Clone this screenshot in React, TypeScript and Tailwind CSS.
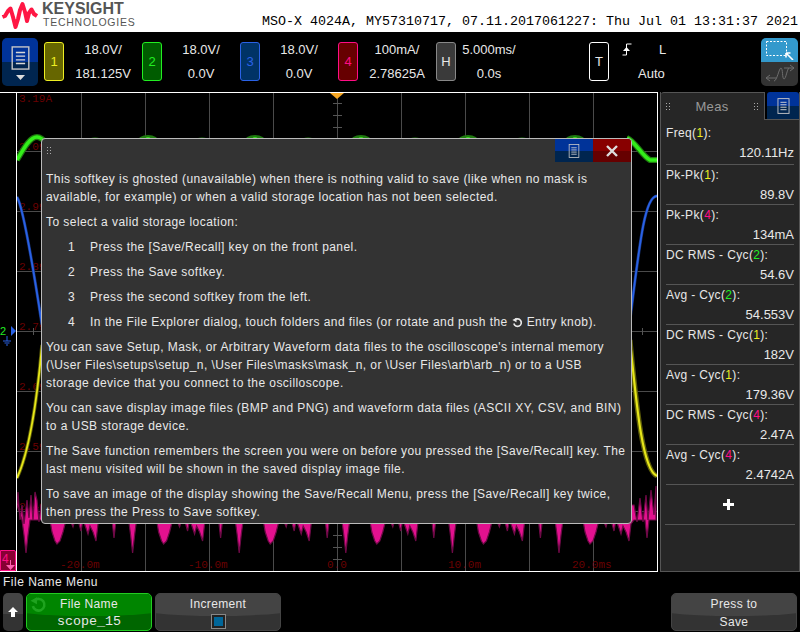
import type { ReactNode } from 'react';

const SANS = "font-['Liberation_Sans',Arial,sans-serif]";
const MONO = "font-['Liberation_Mono','Courier_New',monospace]";

// one period of the pink noise, offsets from the main spike
const PINK_PERIOD: [number, number][] = [
  [-4, 520], [-2, 535], [0, 553], [2, 535], [4, 520], [24, 520], [26, 532], [29, 541], [31, 544],
  [34, 541], [37, 532], [40, 520], [44, 520], [47, 527], [49, 520], [52, 520], [55, 531], [57, 520],
  [60, 528], [62, 534], [64, 526], [67, 532], [70, 541], [72, 524], [75, 520], [86, 520], [88, 538], [90, 520],
];

function pinkPath(): string {
  const bottom: string[] = [];
  for (let n = -1; n < 7; n++) {
    for (const [dx, y] of PINK_PERIOD) {
      const x = 26 + n * 106.6 + dx;
      if (x >= 17 && x <= 656) bottom.push(`${x.toFixed(1)},${y}`);
    }
  }
  const top = [
    [656, 486], [654, 515], [651, 490], [648, 520], [646, 495], [643, 522], [640, 498], [637, 522], [634, 505],
    [41, 505], [39, 522], [37, 500], [35, 492], [33, 520], [31, 495], [29, 518], [27, 500], [24, 524], [22, 505], [20, 520], [18, 492],
  ].map(([x, y]) => `${x},${y}`);
  return `M17,505 L${bottom.join(' L')} L656,520 L${top.join(' L')} Z`;
}

const gridX = [81, 145, 209, 273, 337, 401, 465, 529, 593];
const gridY = [151, 211, 271, 331, 391, 451, 511];
const tickY = [103, 115, 127, 535, 547, 559];
const bigPeaks = [148, 255, 361, 468, 575];
const smallPeaks = [95, 202, 308, 415, 522];
const voltLabels: [string, number][] = [
  ['3.19A', 102], ['3.09A', 150], ['2.99A', 210], ['2.89A', 270], ['2.79A', 330], ['2.69A', 390], ['2.59A', 450], ['2.49A', 510],
];
const timeLabels: [string, number][] = [
  ['-20.0m', 60], ['-10.0m', 188], ['0.0', 327], ['10.0m', 448], ['20.0ms', 572],
];

function Traces() {
  return (
    <svg className={`absolute left-0 top-0 h-[478px] w-[640px] ${MONO}`} viewBox="17 93 640 478">
      {gridX.map((x) => (
        <line key={x} x1={x + 0.5} x2={x + 0.5} y1={93} y2={571} stroke="#4a4a4a" />
      ))}
      {gridY.map((y) => (
        <line key={y} x1={17} x2={657} y1={y + 0.5} y2={y + 0.5} stroke="#4a4a4a" />
      ))}
      {tickY.map((y) => (
        <line key={y} x1={333} x2={342} y1={y + 0.5} y2={y + 0.5} stroke="#555" />
      ))}
      <line x1={33.5} x2={33.5} y1={328} y2={335} stroke="#555" />
      <line x1={642.5} x2={642.5} y1={328} y2={335} stroke="#555" />
      {voltLabels.map(([t, y]) => (
        <text key={y} x={19} y={y} fontSize={11} fill="#6a0000">
          {t}
        </text>
      ))}
      {timeLabels.map(([t, x]) => (
        <text key={x} x={x} y={568} fontSize={11} fill="#6a0000">
          {t}
        </text>
      ))}
      <path d="M330,93 L344,93 L337,99 Z" fill="#f5a623" />

      {smallPeaks.map((x) => (
        <ellipse key={x} cx={x} cy={140} rx={7} ry={2.5} fill="#1f7a10" />
      ))}
      {bigPeaks.map((x) => (
        <g key={x}>
          <ellipse cx={x} cy={142} rx={11} ry={7} fill="#1f7a10" />
          <ellipse cx={x} cy={142} rx={4} ry={5} fill="#33dd18" />
        </g>
      ))}
      <path d="M17,160 C24,148 30,137 37,137 C41,137 44,140 48,145" fill="none" stroke="#1f7a10" strokeWidth={6} />
      <path d="M17,160 C24,148 30,137 37,137 C41,137 44,140 48,145" fill="none" stroke="#33ee1a" strokeWidth={3.5} />
      <path d="M627,138 C635,141 642,156 650,160 L657,160" fill="none" stroke="#1f7a10" strokeWidth={6} />
      <path d="M627,138 C635,141 642,156 650,160 L657,160" fill="none" stroke="#33ee1a" strokeWidth={3.5} />

      <path d="M17,197 C22,205 29,240 42,325" fill="none" stroke="#18347a" strokeWidth={3} />
      <path d="M17,197 C22,205 29,240 42,325" fill="none" stroke="#2a62e6" strokeWidth={1.8} />
      <path d="M657,196 C645,196 640,240 630,320" fill="none" stroke="#18347a" strokeWidth={3} />
      <path d="M657,196 C645,196 640,240 630,320" fill="none" stroke="#2a62e6" strokeWidth={1.8} />

      <path d="M42,345 C38,390 30,450 17,478" fill="none" stroke="#5e5e08" strokeWidth={3.5} />
      <path d="M42,345 C38,390 30,450 17,478" fill="none" stroke="#e6e61a" strokeWidth={1.8} />
      <path d="M630,340 C636,400 642,470 657,476" fill="none" stroke="#5e5e08" strokeWidth={5} />
      <path d="M630,340 C636,400 642,470 657,476" fill="none" stroke="#e6e61a" strokeWidth={2.2} />

      <path d={pinkPath()} fill="#e3118f" stroke="#6d0a46" strokeWidth={1.2} />
    </svg>
  );
}

function MenuGlyph({ className }: { className: string }) {
  return (
    <svg className={className} viewBox="0 0 20 26" fill="none">
      <rect x="1" y="1" width="18" height="24" stroke="#c8c8c8" strokeWidth="1.5" />
      <path d="M5 7H15M5 11H15M5 15H15M5 19H15" stroke="#d8d8d8" strokeWidth="1.5" />
    </svg>
  );
}

function RotateGlyph({ className, color }: { className: string; color: string }) {
  return (
    <svg className={className} viewBox="0 0 16 16" fill="none">
      <path d="M4 4.5A5.5 5.5 0 1 1 2.7 9.5" stroke={color} strokeWidth="2.4" />
      <path d="M0.5 4.5L6.5 1.2V7.8Z" fill={color} />
    </svg>
  );
}

function DragDots({ className = '' }: { className?: string }) {
  return (
    <span className={`grid grid-cols-2 gap-[2px] ${className}`}>
      {[0, 1, 2, 3, 4, 5].map((i) => (
        <span key={i} className="h-px w-px bg-[#aaa]" />
      ))}
    </span>
  );
}

function Channel({
  n,
  scale,
  offset,
  box,
}: {
  n: string;
  scale: string;
  offset: string;
  box: string;
}) {
  return (
    <div className="flex h-[40px] w-[98px] items-center">
      <div className={`flex h-[39px] w-[20px] items-center justify-center rounded-[3px] border text-[13px] ${box}`}>
        {n}
      </div>
      <div className="flex w-[78px] flex-col items-center gap-[5px] text-[13px] leading-[19px] text-[#e8e8e8]">
        <span>{scale}</span>
        <span>{offset}</span>
      </div>
    </div>
  );
}

function TopBar() {
  return (
    <div className="flex h-[60px] items-center bg-black pb-[1px] pl-[2px]">
      <div className="mr-[6px] flex h-[48px] w-[36px] flex-col items-center overflow-hidden rounded-[5px] bg-[linear-gradient(#003399_0_50%,#00254f_50%_100%)]">
        <MenuGlyph className="mt-[8px] h-[24px] w-[19px]" />
        <svg className="mt-[5px] h-[5px] w-[9px]" viewBox="0 0 9 5">
          <path d="M0 0H9L4.5 5Z" fill="#ddd" />
        </svg>
      </div>
      <Channel n="1" scale="18.0V/" offset="181.125V" box="border-[#eeee22] bg-[#666600] text-[#eeee22]" />
      <Channel n="2" scale="18.0V/" offset="0.0V" box="border-[#22ee22] bg-[#005c00] text-[#22ee22]" />
      <Channel n="3" scale="18.0V/" offset="0.0V" box="border-[#2a62e6] bg-[#003366] text-[#2a62e6]" />
      <Channel n="4" scale="100mA/" offset="2.78625A" box="border-[#ff0d86] bg-[#660000] text-[#ff0d86]" />
      <div className="flex h-[39px] w-[20px] items-center justify-center rounded-[3px] border border-[#888] bg-[#3a3a3a] text-[13px] text-[#e8e8e8]">
        H
      </div>
      <div className="flex w-[66px] flex-col items-center gap-[5px] text-[13px] leading-[19px] text-[#e8e8e8]">
        <span>5.000ms/</span>
        <span>0.0s</span>
      </div>
      <div className="ml-[67px] flex h-[39px] w-[20px] items-center justify-center rounded-[3px] border border-white text-[13px] text-[#e8e8e8]">
        T
      </div>
      <div className="ml-[13px] flex w-[64px] flex-col gap-[5px] text-[13px] leading-[19px] text-[#e8e8e8]">
        <div className="flex items-center">
          <svg className="h-[13px] w-[10px]" viewBox="0 0 10 13" fill="none">
            <path d="M0.5 12H4.5V1H9.5" stroke="#fff" />
            <path d="M1 8L4.5 4L8 8Z" fill="#fff" />
          </svg>
          <span className="ml-[27px]">L</span>
        </div>
        <span className="pl-[16px]">Auto</span>
      </div>
      <div className="ml-auto mr-[2px] flex h-[48px] w-[37px] flex-col overflow-hidden rounded-[5px]">
        <div className="flex h-[24px] items-center justify-center bg-[#3399cc]">
          <svg className="h-[21px] w-[31px]" viewBox="0 0 31 21" fill="none">
            <rect x="2.5" y="2.5" width="20" height="14" stroke="#fff" strokeDasharray="2 1.5" />
            <path d="M22 14L29 21M22 14H26.5M22 14V18.5" stroke="#fff" strokeWidth="1.6" />
          </svg>
        </div>
        <div className="flex flex-1 items-center justify-center bg-[#333]">
          <svg className="h-[20px] w-[30px]" viewBox="0 0 30 20" fill="none" stroke="#6e6e6e">
            <path d="M9 17C12 17 14 4 16 4C18 4 17 15 19 15C21 15 22 5 24 4" />
            <path d="M1 14H11M1 14L5 11M1 14L5 17M29 4H19M29 4L25 1M29 4L25 7" />
          </svg>
        </div>
      </div>
    </div>
  );
}

function Ch({ c, children }: { c: string; children: ReactNode }) {
  return <span className={c}>{children}</span>;
}

const YELLOW = 'text-[#eeee22]';
const GREEN = 'text-[#22ee22]';
const PINK = 'text-[#ff0d86]';

const measurements: { name: string; ch: string; color: string; value: string }[] = [
  { name: 'Pk-Pk', ch: '1', color: YELLOW, value: '89.8V' },
  { name: 'Pk-Pk', ch: '4', color: PINK, value: '134mA' },
  { name: 'DC RMS - Cyc', ch: '2', color: GREEN, value: '54.6V' },
  { name: 'Avg - Cyc', ch: '2', color: GREEN, value: '54.553V' },
  { name: 'DC RMS - Cyc', ch: '1', color: YELLOW, value: '182V' },
  { name: 'Avg - Cyc', ch: '1', color: YELLOW, value: '179.36V' },
  { name: 'DC RMS - Cyc', ch: '4', color: PINK, value: '2.47A' },
  { name: 'Avg - Cyc', ch: '4', color: PINK, value: '2.4742A' },
];

function MeasPanel() {
  return (
    <div className="ml-[2px] flex w-[140px] flex-col border-x border-b border-[#555] bg-[#262626] text-[12px] leading-[20px] tracking-[0.35px] text-[#e8e8e8]">
      <div className="flex h-[28px] shrink-0 bg-black">
        <div className="flex w-[104px] items-center justify-between rounded-tl-[3px] border-r border-t border-[#555] bg-[#262626] pl-[5px] pr-[6px]">
          <DragDots />
          <span className="text-[13px] text-[#999]">Meas</span>
          <DragDots />
        </div>
        <div className="flex flex-1 flex-col">
          <div className="ml-[2px] flex flex-1 items-center justify-center rounded-t-[3px] bg-[linear-gradient(#003399_0_50%,#00254f_50%_100%)]">
            <MenuGlyph className="h-[16px] w-[13px]" />
          </div>
          <div className="h-px bg-[#555]" />
        </div>
      </div>
      <div className="mx-[5px] flex h-[45px] flex-col justify-end border-b border-[#555] pb-[1px]">
        <div>Freq(<Ch c={YELLOW}>1</Ch>):</div>
        <div className="text-right text-[13px] tracking-normal">120.11Hz</div>
      </div>
      {measurements.map((m, i) => (
        <div key={i} className="mx-[5px] flex h-[40px] flex-col border-b border-[#555]">
          <div>
            {m.name}(<Ch c={m.color}>{m.ch}</Ch>):
          </div>
          <div className="text-right text-[13px] tracking-normal">{m.value}</div>
        </div>
      ))}
      <div className="mx-[4px] flex h-[40px] items-center justify-center border-b border-[#555] pr-[3px]">
        <span className="relative h-[11px] w-[11px] bg-[linear-gradient(#fff,#fff)] bg-[length:11px_3px] bg-center bg-no-repeat">
          <span className="absolute left-[4px] top-0 h-[11px] w-[3px] bg-white" />
        </span>
      </div>
    </div>
  );
}

function HelpDialog() {
  return (
    <div className="absolute left-[24px] top-[45px] flex h-[386px] w-[591px] flex-col rounded-[4px] border border-[#bbb] bg-[#333] text-[12px] leading-[18px] tracking-[0.44px] text-[#e8e8e8]">
      <div className="flex h-[23px] shrink-0 items-center justify-between">
        <DragDots className="ml-[5px]" />
        <div className="flex h-[23px]">
          <div className="flex w-[38px] items-center justify-center bg-[linear-gradient(#003399_0_50%,#00254f_50%_100%)]">
            <MenuGlyph className="h-[14px] w-[12px]" />
          </div>
          <div className="flex w-[38px] items-center justify-center rounded-tr-[3px] bg-[linear-gradient(#880000_0_50%,#660000_50%_100%)]">
            <svg className="h-[12px] w-[12px]" viewBox="0 0 12 12">
              <path d="M1 1L11 11M11 1L1 11" stroke="#ddd" strokeWidth="2.4" />
            </svg>
          </div>
        </div>
      </div>
      <div className="flex flex-col gap-[7px] pl-[4px] pt-[8px]">
        <p>
          This softkey is ghosted (unavailable) when there is nothing valid to save (like when no mask is
          <br />
          available, for example) or when a valid storage location has not been selected.
        </p>
        <p>To select a valid storage location:</p>
        <ol className="flex flex-col gap-[7px] pl-[22px]">
          {[
            'Press the [Save/Recall] key on the front panel.',
            'Press the Save softkey.',
            'Press the second softkey from the left.',
          ].map((t, i) => (
            <li key={t} className="flex">
              <span className="w-[22px]">{i + 1}</span>
              <span>{t}</span>
            </li>
          ))}
          <li className="flex">
            <span className="w-[22px]">4</span>
            <span className="flex items-center">
              In the File Explorer dialog, touch folders and files (or rotate and push the
              <RotateGlyph className="mx-[4px] h-[11px] w-[11px]" color="#e8e8e8" />
              Entry knob).
            </span>
          </li>
        </ol>
        <p>
          You can save Setup, Mask, or Arbitrary Waveform data files to the oscilloscope's internal memory
          <br />
          (\User Files\setups\setup_n, \User Files\masks\mask_n, or \User Files\arb\arb_n) or to a USB
          <br />
          storage device that you connect to the oscilloscope.
        </p>
        <p>
          You can save display image files (BMP and PNG) and waveform data files (ASCII XY, CSV, and BIN)
          <br />
          to a USB storage device.
        </p>
        <p>
          The Save function remembers the screen you were on before you pressed the [Save/Recall] key. The
          <br />
          last menu visited will be shown in the saved display image file.
        </p>
        <p>
          To save an image of the display showing the Save/Recall Menu, press the [Save/Recall] key twice,
          <br />
          then press the Press to Save softkey.
        </p>
      </div>
    </div>
  );
}

function Softkey({
  title,
  children,
  green,
  className = '',
}: {
  title: string;
  children: ReactNode;
  green?: boolean;
  className?: string;
}) {
  return (
    <div
      className={`relative h-[38px] w-[126px] overflow-hidden rounded-[5px] border text-[12px] leading-[18px] tracking-[0.35px] text-[#e8e8e8] ${
        green ? 'border-[#22cc22] bg-[#006600]' : 'border-[#444] bg-[#333]'
      } ${className}`}
    >
      <div
        className={`absolute -left-[30px] -right-[30px] top-0 h-[22px] rounded-b-[50%] ${
          green ? 'bg-[#008500]' : 'bg-[#444]'
        }`}
      />
      <div className="relative flex h-full flex-col items-center pt-[1px]">
        <span>{title}</span>
        {children}
      </div>
    </div>
  );
}

export default function App() {
  return (
    <div className={`flex h-[632px] w-[800px] flex-col overflow-hidden bg-black ${SANS}`}>
      <header className="flex h-[32px] shrink-0 items-end justify-between bg-white pr-[2px]">
        <div className="flex h-full items-start">
          <svg className="ml-[1px] mt-[1px] h-[29px] w-[37px]" viewBox="0 0 37 29" fill="none">
            <path
              d="M1.5 16L4 15L7 10L9.5 7.5L12 16L14.5 26L17 18L19 9L21.5 3L24 11L26 20L28 12L30.5 8.5L33 13L36 15"
              stroke="#ff1744"
              strokeWidth="4"
              strokeLinejoin="round"
            />
          </svg>
          <div className="ml-[4px] flex flex-col text-[#555]">
            <span className="mt-[1px] text-[16px] font-bold leading-[16px]">KEYSIGHT</span>
            <span className="pl-px text-[10.5px] leading-[10px] tracking-[0.75px]">TECHNOLOGIES</span>
          </div>
        </div>
        <span className={`pb-[2px] text-[13.33px] leading-[16px] text-black ${MONO}`}>
          MSO-X 4024A, MY57310717, 07.11.2017061227: Thu Jul 01 13:31:37 2021
        </span>
      </header>

      <TopBar />

      <div className="flex h-[480px] shrink-0">
        <div className="relative h-full w-[16px] border-y border-white">
          <span className="absolute left-0 top-[232px] text-[11px] leading-[12px] text-[#22ee22]">2</span>
          <svg className="absolute left-[3px] top-[232px] h-[22px] w-[13px]" viewBox="0 0 13 22" fill="none">
            <path d="M8 1L13 6L8 11Z" fill="#2a62e6" />
            <path d="M4 11V16M0 16H8M1.5 18H6.5M3 20H5" stroke="#2a62e6" />
          </svg>
          <div className="absolute bottom-0 left-0 flex h-[21px] w-[16px] items-start rounded-tr-[2px] border border-[#ff0d86] bg-[#880033] text-[12px] leading-[16px] text-[#ff0d86]">
            <span className="pl-px">4</span>
            <svg className="absolute bottom-0 right-0 h-[10px] w-[9px]" viewBox="0 0 9 10">
              <path d="M4 0H5V5H9L4.5 10L0 5H4Z" fill="#ff5fb0" />
            </svg>
          </div>
        </div>
        <div className="relative h-full w-[642px] border border-white bg-black">
          <Traces />
          <HelpDialog />
        </div>
        <MeasPanel />
      </div>

      <div className="flex min-h-0 flex-1 flex-col pl-[3px] pr-[3px]">
        <div className="h-[21px] pt-[1px] text-[12px] leading-[19px] tracking-[0.5px] text-[#e8e8e8]">File Name Menu</div>
        <div className="flex gap-[3px]">
          <div className="flex h-[38px] w-[20px] items-center justify-center rounded-[5px] bg-[linear-gradient(#444_0_55%,#333_55%_100%)]">
            <svg className="h-[10px] w-[10px]" viewBox="0 0 10 10">
              <path d="M5 0L10 5H7V10H3V5H0Z" fill="#fff" />
            </svg>
          </div>
          <Softkey title="File Name" green>
            <span className={`mt-px text-[13.33px] leading-[16px] tracking-normal ${MONO}`}>scope_15</span>
            <RotateGlyph className="absolute left-[3px] top-[2px] h-[17px] w-[17px]" color="#1fa31f" />
          </Softkey>
          <Softkey title="Increment">
            <span className="mt-px flex h-[15px] w-[15px] items-center justify-center border border-[#888] bg-[#222]">
              <span className="h-[9px] w-[9px] bg-[#006699]" />
            </span>
          </Softkey>
          <Softkey title="Press to" className="ml-auto">
            <span>Save</span>
          </Softkey>
        </div>
      </div>
    </div>
  );
}
